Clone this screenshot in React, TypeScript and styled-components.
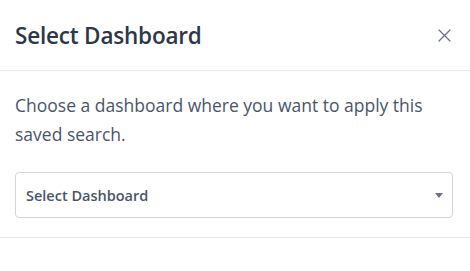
import React from 'react';
import styled, { createGlobalStyle } from 'styled-components';

const GlobalStyle = createGlobalStyle`
  html, body {
    margin: 0;
    padding: 0;
    background: #ffffff;
  }
  body {
    font-family: 'Open Sans', 'Noto Sans', sans-serif;
    -webkit-font-smoothing: antialiased;
  }
`;

const Modal = styled.div`
  width: 470px;
  height: 271px;
  display: flex;
  flex-direction: column;
  background: #ffffff;
`;

const Header = styled.div`
  height: 71px;
  display: flex;
  align-items: center;
  justify-content: space-between;
  padding: 0 16px 0 15px;
  border-bottom: 1px solid #e5e7eb;
  box-sizing: border-box;
`;

const Title = styled.h2`
  margin: 0;
  font-size: 22.5px;
  font-weight: 600;
  color: #2d3748;
  letter-spacing: -0.2px;
`;

const CloseButton = styled.button`
  border: none;
  background: none;
  padding: 0;
  width: 20px;
  height: 20px;
  display: flex;
  align-items: center;
  justify-content: center;
  cursor: pointer;
  color: #6b7280;
`;

const Body = styled.div`
  padding: 20px 17px 19px 15px;
  border-bottom: 1px solid #e5e7eb;
  display: flex;
  flex-direction: column;
  gap: 23px;
`;

const Description = styled.p`
  margin: 0;
  font-size: 17.5px;
  line-height: 29px;
  color: #4a5568;
`;

const SelectBox = styled.div`
  height: 46px;
  box-sizing: border-box;
  border: 1px solid #d1d5db;
  border-radius: 4px;
  display: flex;
  align-items: center;
  justify-content: space-between;
  padding: 0 9px 0 10px;
  cursor: pointer;
`;

const SelectText = styled.span`
  font-size: 14.5px;
  font-weight: 600;
  color: #4a5568;
`;

const Arrow = styled.span`
  width: 0;
  height: 0;
  border-left: 4px solid transparent;
  border-right: 4px solid transparent;
  border-top: 5px solid #6b7280;
`;

const App: React.FC = () => {
  return (
    <>
      <GlobalStyle />
      <Modal>
        <Header>
          <Title>Select Dashboard</Title>
          <CloseButton aria-label="Close">
            <svg width="13" height="13" viewBox="0 0 13 13" fill="none">
              <path d="M1 1L12 12M12 1L1 12" stroke="currentColor" strokeWidth="1.3" strokeLinecap="round" />
            </svg>
          </CloseButton>
        </Header>
        <Body>
          <Description>Choose a dashboard where you want to apply this saved search.</Description>
          <SelectBox>
            <SelectText>Select Dashboard</SelectText>
            <Arrow />
          </SelectBox>
        </Body>
      </Modal>
    </>
  );
};

export default App;
